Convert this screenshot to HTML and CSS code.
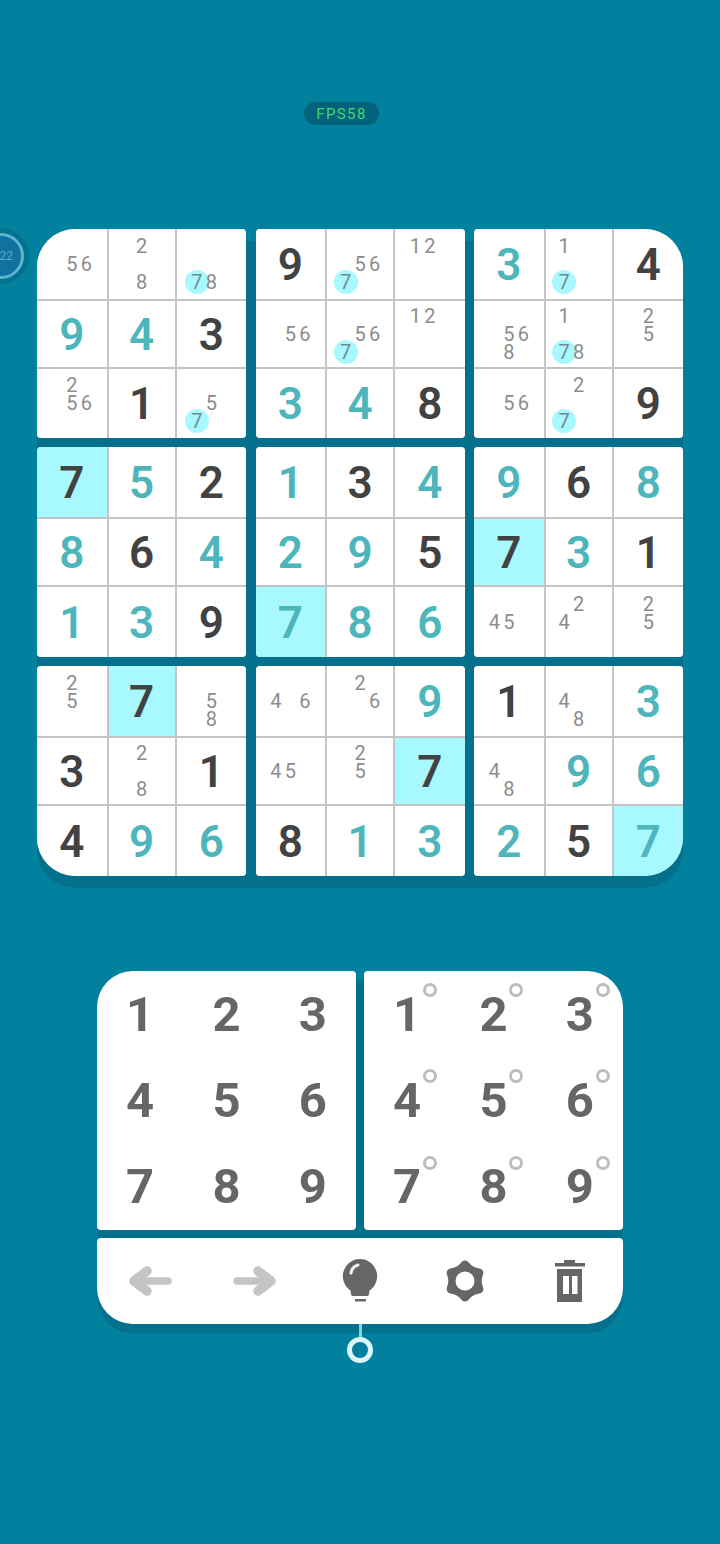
FILE: index.html
```html
<!DOCTYPE html>
<html lang="en">
<head>
  <meta charset="UTF-8" />
  <title>Sudoku</title>
  <link rel="stylesheet" href="styles.css">
</head>
<body>

  <div class="fps">FPS58</div>

  <div class="timer"><span>22</span></div>

  <!-- board -->
  <div class="board">
    <div class="box tl">
      <div class="cell"><i class="n5">5</i><i class="n6">6</i></div>
      <div class="cell"><i class="n2">2</i><i class="n8">8</i></div>
      <div class="cell"><i class="n7 hl">7</i><i class="n8">8</i></div>
      <div class="cell entry">9</div>
      <div class="cell entry">4</div>
      <div class="cell clue">3</div>
      <div class="cell"><i class="n2">2</i><i class="n5">5</i><i class="n6">6</i></div>
      <div class="cell clue">1</div>
      <div class="cell"><i class="n5">5</i><i class="n7 hl">7</i></div>
    </div>
    <div class="box">
      <div class="cell clue">9</div>
      <div class="cell"><i class="n5">5</i><i class="n6">6</i><i class="n7 hl">7</i></div>
      <div class="cell"><i class="n1">1</i><i class="n2">2</i></div>
      <div class="cell"><i class="n5">5</i><i class="n6">6</i></div>
      <div class="cell"><i class="n5">5</i><i class="n6">6</i><i class="n7 hl">7</i></div>
      <div class="cell"><i class="n1">1</i><i class="n2">2</i></div>
      <div class="cell entry">3</div>
      <div class="cell entry">4</div>
      <div class="cell clue">8</div>
    </div>
    <div class="box tr">
      <div class="cell entry">3</div>
      <div class="cell"><i class="n1">1</i><i class="n7 hl">7</i></div>
      <div class="cell clue">4</div>
      <div class="cell"><i class="n5">5</i><i class="n6">6</i><i class="n8">8</i></div>
      <div class="cell"><i class="n1">1</i><i class="n7 hl">7</i><i class="n8">8</i></div>
      <div class="cell"><i class="n2">2</i><i class="n5">5</i></div>
      <div class="cell"><i class="n5">5</i><i class="n6">6</i></div>
      <div class="cell"><i class="n2">2</i><i class="n7 hl">7</i></div>
      <div class="cell clue">9</div>
    </div>

    <div class="box">
      <div class="cell clue hit">7</div>
      <div class="cell entry">5</div>
      <div class="cell clue">2</div>
      <div class="cell entry">8</div>
      <div class="cell clue">6</div>
      <div class="cell entry">4</div>
      <div class="cell entry">1</div>
      <div class="cell entry">3</div>
      <div class="cell clue">9</div>
    </div>
    <div class="box">
      <div class="cell entry">1</div>
      <div class="cell clue">3</div>
      <div class="cell entry">4</div>
      <div class="cell entry">2</div>
      <div class="cell entry">9</div>
      <div class="cell clue">5</div>
      <div class="cell entry hit">7</div>
      <div class="cell entry">8</div>
      <div class="cell entry">6</div>
    </div>
    <div class="box">
      <div class="cell entry">9</div>
      <div class="cell clue">6</div>
      <div class="cell entry">8</div>
      <div class="cell clue hit">7</div>
      <div class="cell entry">3</div>
      <div class="cell clue">1</div>
      <div class="cell"><i class="n4">4</i><i class="n5">5</i></div>
      <div class="cell"><i class="n2">2</i><i class="n4">4</i></div>
      <div class="cell"><i class="n2">2</i><i class="n5">5</i></div>
    </div>

    <div class="box bl">
      <div class="cell"><i class="n2">2</i><i class="n5">5</i></div>
      <div class="cell clue hit">7</div>
      <div class="cell"><i class="n5">5</i><i class="n8">8</i></div>
      <div class="cell clue">3</div>
      <div class="cell"><i class="n2">2</i><i class="n8">8</i></div>
      <div class="cell clue">1</div>
      <div class="cell clue">4</div>
      <div class="cell entry">9</div>
      <div class="cell entry">6</div>
    </div>
    <div class="box">
      <div class="cell"><i class="n4">4</i><i class="n6">6</i></div>
      <div class="cell"><i class="n2">2</i><i class="n6">6</i></div>
      <div class="cell entry">9</div>
      <div class="cell"><i class="n4">4</i><i class="n5">5</i></div>
      <div class="cell"><i class="n2">2</i><i class="n5">5</i></div>
      <div class="cell clue hit">7</div>
      <div class="cell clue">8</div>
      <div class="cell entry">1</div>
      <div class="cell entry">3</div>
    </div>
    <div class="box br">
      <div class="cell clue">1</div>
      <div class="cell"><i class="n4">4</i><i class="n8">8</i></div>
      <div class="cell entry">3</div>
      <div class="cell"><i class="n4">4</i><i class="n8">8</i></div>
      <div class="cell entry">9</div>
      <div class="cell entry">6</div>
      <div class="cell entry">2</div>
      <div class="cell clue">5</div>
      <div class="cell entry hit">7</div>
    </div>
  </div>

  <!-- number pads and tools -->
  <div class="panel">
    <div class="pads">
      <div class="pad pad-left">
        <button>1</button><button>2</button><button>3</button>
        <button>4</button><button>5</button><button>6</button>
        <button>7</button><button>8</button><button>9</button>
      </div>
      <div class="pad pad-right">
        <button class="pencil">1</button><button class="pencil">2</button><button class="pencil">3</button>
        <button class="pencil">4</button><button class="pencil">5</button><button class="pencil">6</button>
        <button class="pencil">7</button><button class="pencil">8</button><button class="pencil">9</button>
      </div>
    </div>
    <div class="tools">
      <div class="tool">
        <svg width="44" height="30" viewBox="0 0 44 30" fill="none" stroke="#c4c4c4" stroke-linecap="round" stroke-linejoin="round"><path d="M40 15H8" stroke-width="7.500"/><path d="M19 5 6 15l13 10" stroke-width="9.500"/></svg>
      </div>
      <div class="tool">
        <svg width="44" height="30" viewBox="0 0 44 30" fill="none" stroke="#c4c4c4" stroke-linecap="round" stroke-linejoin="round"><path d="M4 15h32" stroke-width="7.500"/><path d="M25 5l13 10-13 10" stroke-width="9.500"/></svg>
      </div>
      <div class="tool">
        <svg width="36" height="44" viewBox="0 0 36 44">
          <path d="M18 0a17.200 17.200 0 0 1 9.500 31.500l-.5 3.500a2 2 0 0 1-2 2H11a2 2 0 0 1-2-2l-.5-3.500A17.200 17.200 0 0 1 18 0z" fill="#666"/>
          <path d="M13 40h11v2.500H13z" fill="#666"/>
          <path d="M9 14a10 10 0 0 1 7-8" fill="none" stroke="#fff" stroke-width="3" stroke-linecap="round" opacity=".9"/>
        </svg>
      </div>
      <div class="tool">
        <svg width="44" height="44" viewBox="0 0 44 44">
          <path d="M22 6Q27.250 12.900 35.860 14Q32.500 22 35.860 30Q27.250 31.100 22 38Q16.750 31.100 8.140 30Q11.500 22 8.140 14Q16.750 12.900 22 6z" fill="#666" stroke="#666" stroke-width="9" stroke-linejoin="round"/>
          <circle cx="22" cy="22" r="9.500" fill="#fff"/>
        </svg>
      </div>
      <div class="tool">
        <svg width="30" height="42" viewBox="0 0 30 42">
          <path d="M9 0h11v3H9zM0 3h30v3.500H0zM2 9h25v33H2z" fill="#666"/>
          <path d="M8 16h6v18H8zM17 16h5.500v18H17z" fill="#fff"/>
        </svg>
      </div>
    </div>
  </div>
  <div class="pin"></div>

</body>
</html>
```

FILE: styles.css
```css
body {
  font-family: "Roboto", "Noto Sans", sans-serif;
  background-color: #02819f;
  margin: 0;
  height: 1544px;
  overflow: hidden;
  position: relative;
  display: flex;
  flex-direction: column;
  align-items: center;
}

/* top badge */
.fps {
  margin-top: 102px;
  align-self: flex-start;
  margin-left: 304px;
  width: 75px;
  height: 23px;
  line-height: 24px;
  border-radius: 12px;
  background-color: #03627c;
  color: #41d86f;
  font-size: 15px;
  letter-spacing: 1.4px;
  text-align: center;
}

.timer {
  position: absolute;
  left: -22px;
  top: 233px;
  width: 46px;
  height: 46px;
  box-sizing: border-box;
  border: 3px solid #5db4d2;
  border-radius: 50%;
  background-color: #12729f;
  box-shadow: 0 0 0 5px #03728f;
  display: flex;
  align-items: center;
  justify-content: flex-end;
  padding-right: 8px;
  color: #5fa7c7;
  font-size: 12px;
}

/* board */
.board {
  margin-top: 104px;
  width: 646px;
  display: grid;
  grid-template-columns: repeat(3, 209px);
  grid-template-rows: 209px 210px 210px;
  column-gap: 9.5px;
  row-gap: 9px;
  border-radius: 38px;
  background: linear-gradient(transparent 12px, #04708c 12px);
  box-shadow: 0 12px 0 #04708c;
}

.box {
  display: grid;
  grid-template-columns: 69.5px 66px 69.5px;
  grid-template-rows: 1fr 66px 1fr;
  gap: 2px;
  background-color: #c4c4c4;
  border-radius: 4px;
  overflow: hidden;
}

.tl { border-top-left-radius: 38px; }
.tr { border-top-right-radius: 38px; }
.bl { border-bottom-left-radius: 38px; }
.br { border-bottom-right-radius: 38px; }

.cell {
  background-color: white;
  display: grid;
  grid-template-columns: repeat(3, 14.5px);
  grid-template-rows: repeat(3, 18px);
  justify-content: center;
  align-content: center;
  justify-items: center;
  align-items: center;
  font-size: 20px;
  color: #8c8c8c;
}

.clue,
.entry {
  display: flex;
  align-items: center;
  justify-content: center;
  padding-top: 2px;
  font-size: 44px;
  font-weight: 600;
}

.clue { color: #424242; }
.entry { color: #4db6bc; }
.hit { background-color: #a8f8ff; }

.cell i {
  font-style: normal;
  line-height: 18px;
  z-index: 1;
}

.n1 { grid-area: 1 / 1; }
.n2 { grid-area: 1 / 2; }
.n4 { grid-area: 2 / 1; }
.n5 { grid-area: 2 / 2; }
.n6 { grid-area: 2 / 3; }
.n7 { grid-area: 3 / 1; }
.n8 { grid-area: 3 / 2; }

.hl {
  width: 24px;
  height: 24px;
  line-height: 24px !important;
  border-radius: 50%;
  background-color: #a8f8ff;
  text-align: center;
  color: #6f8c92;
}

/* controls */
.panel {
  margin-top: 95px;
  width: 526px;
  border-radius: 36px;
  background: linear-gradient(transparent 9px, #04708c 9px);
  box-shadow: 0 9px 0 #04708c;
}

.pads {
  display: flex;
  gap: 8px;
}

.pad {
  width: 259px;
  height: 259px;
  display: grid;
  grid-template-columns: repeat(3, 1fr);
  grid-template-rows: repeat(3, 1fr);
  background-color: white;
  border-radius: 4px;
}

.pad-left { border-top-left-radius: 36px; }
.pad-right { border-top-right-radius: 36px; }

.pad button {
  background: none;
  border: none;
  padding: 0;
  position: relative;
  font-family: inherit;
  font-size: 49px;
  font-weight: 700;
  color: #666;
}

.pencil::after {
  content: "";
  position: absolute;
  left: 59px;
  top: 12px;
  width: 14px;
  height: 14px;
  box-sizing: border-box;
  border: 3.5px solid #bdbdbd;
  border-radius: 50%;
}

.tools {
  height: 86px;
  margin-top: 8px;
  display: grid;
  grid-template-columns: repeat(5, 1fr);
  background-color: white;
  border-radius: 4px 4px 36px 36px;
}

.tool {
  display: flex;
  align-items: center;
  justify-content: center;
}

.pin {
  width: 3px;
  height: 16px;
  background-color: #8fd0e0;
  position: relative;
}

.pin::after {
  content: "";
  position: absolute;
  left: -11.500px;
  top: 13px;
  width: 26px;
  height: 26px;
  box-sizing: border-box;
  border: 5px solid #def5f8;
  border-radius: 50%;
}
```
